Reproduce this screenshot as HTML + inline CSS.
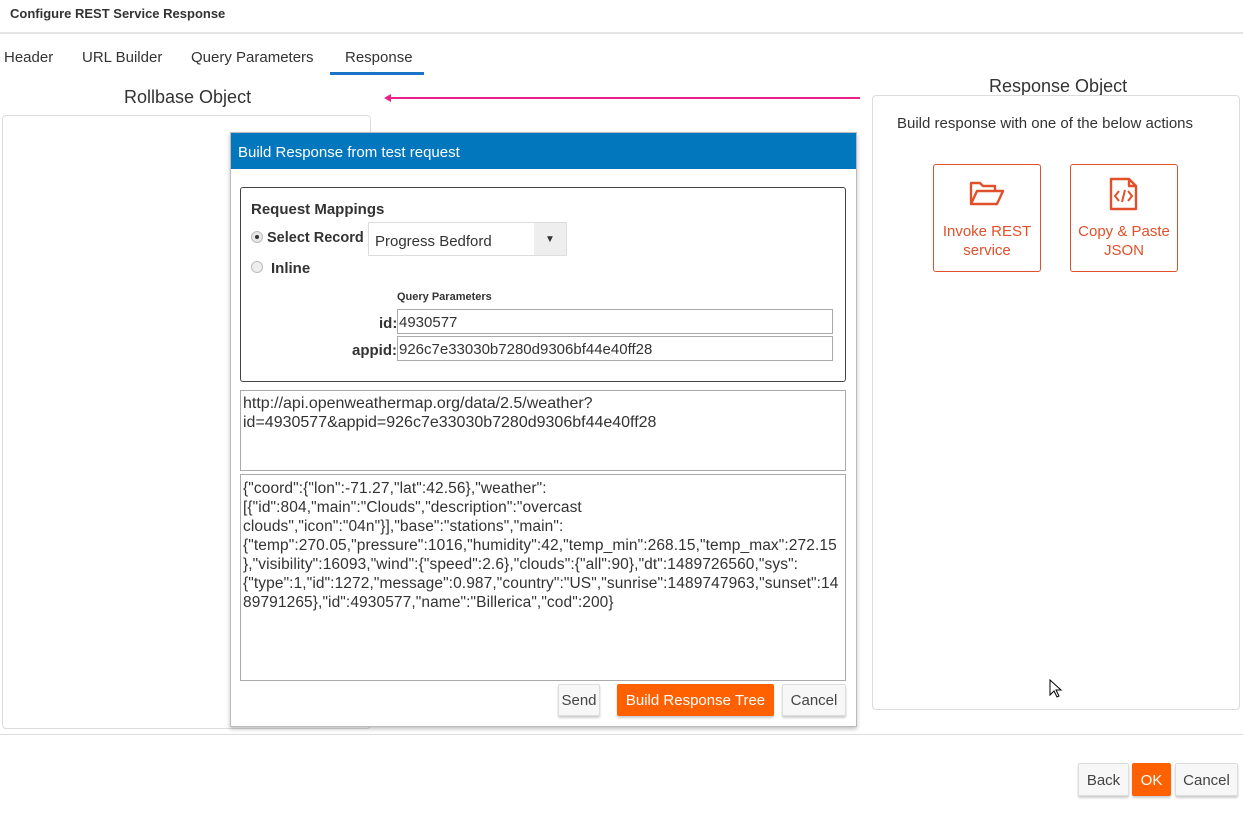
<!DOCTYPE html>
<html><head><meta charset="utf-8"><style>
*{box-sizing:border-box;margin:0;padding:0}
body{width:1243px;height:820px;position:relative;background:#fff;font-family:"Liberation Sans",sans-serif;color:#333;overflow:hidden}
.a{position:absolute;white-space:nowrap}
.btn{position:absolute;border:1px solid #ddd;background:#f7f7f7;border-radius:2px;box-shadow:0 2px 2px rgba(0,0,0,.2);font-size:15px;text-align:center;color:#444}
.or{background:#ff6100;color:#fff;border-color:#ff6100}
.inp{position:absolute;border:1px solid #aaa;font-size:15px;padding:4px 1px 2px;color:#333}
.act{position:absolute;border:1px solid #e0502a;border-radius:3px;color:#e0502a;font-size:15px;text-align:center;line-height:19px}
</style></head><body>
<div class="a" style="left:10px;top:6px;font-size:13px;font-weight:bold;color:#333">Configure REST Service Response</div>
<div class="a" style="left:0;top:32px;width:1243px;height:2px;background:#e5e5e5"></div>
<div class="a" style="left:4px;top:49px;font-size:15px">Header</div>
<div class="a" style="left:82px;top:49px;font-size:15px">URL Builder</div>
<div class="a" style="left:191px;top:49px;font-size:15px">Query Parameters</div>
<div class="a" style="left:345px;top:49px;font-size:15px">Response</div>
<div class="a" style="left:330px;top:72px;width:94px;height:3px;background:#1a73c7"></div>
<div class="a" style="left:124px;top:87px;font-size:18px">Rollbase Object</div>
<div class="a" style="left:390px;top:97px;width:470px;height:2px;background:#e9228a"></div>
<div class="a" style="left:384px;top:94px;width:0;height:0;border-top:4px solid transparent;border-bottom:4px solid transparent;border-right:7px solid #e9228a"></div>
<div class="a" style="left:2px;top:115px;width:369px;height:614px;border:1px solid #ddd;border-radius:4px"></div>
<div class="a" style="left:989px;top:76px;font-size:18px">Response Object</div>
<div class="a" style="left:872px;top:95px;width:368px;height:615px;border:1px solid #ddd;border-radius:4px"></div>
<div class="a" style="left:897px;top:115px;font-size:15px">Build response with one of the below actions</div>
<div class="act" style="left:933px;top:164px;width:108px;height:108px;padding-top:57px">Invoke REST<br>service</div>
<svg class="a" style="left:968px;top:178px" width="38" height="30" viewBox="0 0 38 30"><path d="M3 26V5h9l3 3h12v5M3 26l6-13h26l-6 13z" fill="none" stroke="#e0502a" stroke-width="2.4" stroke-linejoin="round"/></svg>
<div class="act" style="left:1070px;top:164px;width:108px;height:108px;padding-top:57px">Copy &amp; Paste<br>JSON</div>
<svg class="a" style="left:1108px;top:177px" width="32" height="34" viewBox="0 0 32 34"><path d="M3 2h18l7 7v23H3z M21 2v7h7" fill="none" stroke="#e0502a" stroke-width="2.4" stroke-linejoin="round"/><path d="M11 14l-4 5 4 5M20 14l4 5-4 5M17 13l-3 12" fill="none" stroke="#e0502a" stroke-width="2"/></svg>
<div class="a" style="left:230px;top:132px;width:627px;height:595px;border:1px solid #bbb;background:#fff;box-shadow:0 2px 4px rgba(0,0,0,.25)"></div>
<div class="a" style="left:231px;top:133px;width:625px;height:36px;background:#0277bd;color:#fff;font-size:15px;padding:11px 7px 0">Build Response from test request</div>
<div class="a" style="left:240px;top:187px;width:606px;height:195px;border:1px solid #444;border-radius:3px"></div>
<div class="a" style="left:251px;top:201px;font-size:15px;font-weight:bold">Request Mappings</div>
<div class="a" style="left:251px;top:231px;width:12px;height:12px;border-radius:50%;background:#e8e8e8;border:1px solid #bbb"></div>
<div class="a" style="left:255px;top:235px;width:4px;height:4px;border-radius:50%;background:#333"></div>
<div class="a" style="left:267px;top:230px;font-size:14.5px;font-weight:bold">Select Record</div>
<div class="a" style="left:368px;top:222px;width:199px;height:34px;border:1px solid #ddd;font-size:15px;padding:10px 6px 0">Progress Bedford</div>
<div class="a" style="left:534px;top:223px;width:32px;height:32px;background:#eee;font-size:10px;text-align:center;line-height:34px">▼</div>
<div class="a" style="left:251px;top:261px;width:12px;height:12px;border-radius:50%;background:#eee;border:1px solid #bbb"></div>
<div class="a" style="left:271px;top:260px;font-size:15px;font-weight:bold">Inline</div>
<div class="a" style="left:397px;top:291px;font-size:11px;font-weight:bold">Query Parameters</div>
<div class="a" style="left:379px;top:315px;font-size:15px;font-weight:bold">id:</div>
<div class="inp" style="left:397px;top:309px;width:436px;height:25px">4930577</div>
<div class="a" style="left:352px;top:342px;font-size:15px;font-weight:bold">appid:</div>
<div class="inp" style="left:397px;top:336px;width:436px;height:25px">926c7e33030b7280d9306bf44e40ff28</div>
<div class="inp" style="left:240px;top:390px;width:606px;height:81px;line-height:19px;padding:3px 2px;font-size:16px">http://api.openweathermap.org/data/2.5/weather?<br>id=4930577&amp;appid=926c7e33030b7280d9306bf44e40ff28</div>
<div class="inp" style="left:240px;top:474px;width:606px;height:207px;line-height:19px;padding:4px 2px;font-size:15.5px;letter-spacing:.1px;overflow:hidden">{"coord":{"lon":-71.27,"lat":42.56},"weather":<br>[{"id":804,"main":"Clouds","description":"overcast<br>clouds","icon":"04n"}],"base":"stations","main":<br>{"temp":270.05,"pressure":1016,"humidity":42,"temp_min":268.15,"temp_max":272.15<br>},"visibility":16093,"wind":{"speed":2.6},"clouds":{"all":90},"dt":1489726560,"sys":<br>{"type":1,"id":1272,"message":0.987,"country":"US","sunrise":1489747963,"sunset":14<br>89791265},"id":4930577,"name":"Billerica","cod":200}</div>
<div class="btn" style="left:558px;top:684px;width:42px;height:32px;line-height:32px">Send</div>
<div class="btn or" style="left:617px;top:684px;width:157px;height:32px;line-height:32px">Build Response Tree</div>
<div class="btn" style="left:782px;top:684px;width:64px;height:32px;line-height:32px">Cancel</div>
<div class="a" style="left:0;top:734px;width:1243px;height:1px;background:#ddd"></div>
<div class="btn" style="left:1078px;top:763px;width:51px;height:33px;line-height:33px">Back</div>
<div class="btn or" style="left:1132px;top:763px;width:39px;height:33px;line-height:33px">OK</div>
<div class="btn" style="left:1175px;top:763px;width:63px;height:33px;line-height:33px">Cancel</div>
<svg class="a" style="left:1049px;top:679px" width="14" height="20" viewBox="0 0 14 20"><path d="M1 1v15l4-4 3 6 2-1-3-6h5z" fill="#fff" stroke="#000" stroke-width="1"/></svg>
</body></html>
